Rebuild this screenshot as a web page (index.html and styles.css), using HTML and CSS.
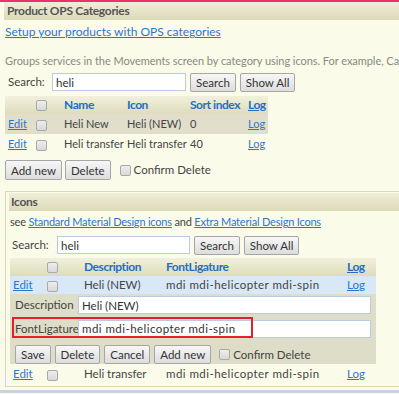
FILE: index.html
```html
<!DOCTYPE html>
<html>
<head>
<meta charset="utf-8">
<link rel="stylesheet" href="styles.css">
</head>
<body>
<div class="topline"></div>
<section class="panel first">
  <h2 class="phead">Product OPS Categories</h2>
  <div class="pbody">
    <a class="link setup" href="#">Setup your products with OPS categories</a>
    <p class="desc">Groups services in the Movements screen by category using icons. For example, Categories</p>
    <div class="search">
      <span class="slabel">Search:</span>
      <input class="field sfield" type="text" value="heli">
      <button class="btn">Search</button>
      <button class="btn">Show All</button>
    </div>
    <table class="grid g1">
      <colgroup><col class="c1"><col class="c2"><col class="c3"><col class="c4"><col class="c5"><col class="c6"></colgroup>
      <thead>
        <tr><th></th><th><input type="checkbox" class="cb"></th><th>Name</th><th>Icon</th><th>Sort index</th><th><a href="#" class="hlink">Log</a></th></tr>
      </thead>
      <tbody>
        <tr class="sel"><td><a class="link" href="#">Edit</a></td><td><input type="checkbox" class="cb"></td><td>Heli New</td><td>Heli (NEW)</td><td>0</td><td><a class="link" href="#">Log</a></td></tr>
        <tr><td><a class="link" href="#">Edit</a></td><td><input type="checkbox" class="cb"></td><td>Heli transfer</td><td>Heli transfer</td><td>40</td><td><a class="link" href="#">Log</a></td></tr>
      </tbody>
    </table>
    <div class="actions">
      <button class="btn">Add new</button>
      <button class="btn">Delete</button>
      <label class="confirm"><input type="checkbox" class="cb">Confirm Delete</label>
    </div>
  </div>
</section>
<section class="panel second">
  <h2 class="phead">Icons</h2>
  <div class="pbody">
    <p class="see">see <a class="link" href="#">Standard Material Design icons</a> and <a class="link" href="#">Extra Material Design Icons</a></p>
    <div class="search s2">
      <span class="slabel">Search:</span>
      <input class="field sfield" type="text" value="heli">
      <button class="btn">Search</button>
      <button class="btn">Show All</button>
    </div>
    <table class="grid g2">
      <colgroup><col class="d1"><col class="d2"><col class="d3"><col class="d4"><col class="d5"></colgroup>
      <thead>
        <tr><th></th><th><input type="checkbox" class="cb"></th><th>Description</th><th>FontLigature</th><th><a href="#" class="hlink">Log</a></th></tr>
      </thead>
      <tbody>
        <tr class="blue"><td><a class="link" href="#">Edit</a></td><td><input type="checkbox" class="cb"></td><td>Heli (NEW)</td><td class="mdi">mdi mdi-helicopter mdi-spin</td><td><a class="link" href="#">Log</a></td></tr>
        <tr class="editrow"><td colspan="5">
          <div class="editor">
            <div class="frow f1"><span class="flabel">Description</span><input class="field finput" type="text" value="Heli (NEW)"></div>
            <div class="frow f2"><span class="flabel">FontLigature</span><input class="field finput mdi" type="text" value="mdi mdi-helicopter mdi-spin"><span class="mark"></span></div>
            <div class="ebtns">
              <button class="btn">Save</button>
              <button class="btn">Delete</button>
              <button class="btn">Cancel</button>
              <button class="btn">Add new</button>
              <label class="confirm"><input type="checkbox" class="cb">Confirm Delete</label>
            </div>
          </div>
        </td></tr>
        <tr class="last"><td><a class="link" href="#">Edit</a></td><td><input type="checkbox" class="cb"></td><td>Heli transfer</td><td class="mdi">mdi mdi-helicopter mdi-spin</td><td><a class="link" href="#">Log</a></td></tr>
      </tbody>
    </table>
  </div>
</section>
<div class="bottomband"></div>
</body>
</html>
```

FILE: styles.css
```css
html, body {
  margin: 0;
  padding: 0;
  background: #fbfbea;
  width: 399px;
  height: 394px;
  overflow: hidden;
}
body {
  font-family: "Lato", "Open Sans", sans-serif;
  font-size: 11.5px;
  color: #444;
  line-height: 14px;
}
.topline {
  height: 2px;
  background: #e8336b;
}
.panel {
  margin: 0;
}
.phead {
  margin: 0;
  font-size: 12px;
  letter-spacing: -0.3px;
  font-weight: bold;
  color: #555;
  background: linear-gradient(#efeed8, #dcdab8);
  height: 18px;
  line-height: 18px;
  padding-left: 3px;
  white-space: nowrap;
}
.first {
  padding-left: 4px;
}
.first .pbody {
  padding-left: 1px;
  white-space: nowrap;
}
.link {
  color: #2a78cc;
  text-decoration: underline;
}
.setup {
  display: block;
  margin-top: 5px;
  font-size: 12px;
  line-height: 14px;
}
.desc {
  margin: 15px 0 0 0;
  font-size: 11px;
  letter-spacing: -0.05px;
  color: #8a8a80;
  white-space: nowrap;
  overflow: hidden;
  line-height: 14px;
}
.search {
  display: flex;
  align-items: center;
  margin-top: 5px;
  height: 18px;
  padding-left: 3px;
}
.slabel {
  width: 44px;
}
.field {
  font-family: inherit;
  font-size: 11.5px;
  color: #333;
  border: 1px solid #b9cbe0;
  background: #fff;
  height: 18px;
  box-sizing: border-box;
  padding: 0 3px;
  margin: 0;
  outline: none;
}
.sfield {
  width: 134px;
  margin-right: 4px;
}
.btn {
  font-family: inherit;
  font-size: 11.5px;
  color: #333;
  height: 19px;
  padding: 0 5px;
  margin: 0 4px 0 0;
  border: 1px solid #a6a6a6;
  border-radius: 2px;
  background: linear-gradient(#f7f7f7, #dddddd);
  line-height: 17px;
}
.grid {
  border-collapse: collapse;
  table-layout: fixed;
  margin-top: 5px;
}
.grid th, .grid td {
  padding: 0 0 0 3px;
  text-align: left;
  white-space: nowrap;
  overflow: hidden;
  vertical-align: middle;
}
.grid th {
  color: #1f6fc2;
  font-size: 12px;
  letter-spacing: -0.45px;
  font-weight: bold;
  background: linear-gradient(#f1f0dc, #dedcbc);
  height: 18px;
}
.g1 { width: 263px; }
.g1 td { height: 20px; font-size: 11px; }
.c1 { width: 28px; }
.c2 { width: 28px; }
.c3 { width: 63px; }
.c4 { width: 63px; }
.c5 { width: 58px; }
.c6 { width: 23px; }
.hlink {
  color: #1f6fc2;
  text-decoration: underline;
}
.sel td {
  background: #e1dfcb;
}
.cb {
  appearance: none;
  -webkit-appearance: none;
  width: 11px;
  height: 11px;
  margin: 0;
  border: 1px solid #a9a9a9;
  border-radius: 2px;
  background: linear-gradient(#eeeeee, #d8d8d8);
  vertical-align: middle;
  box-sizing: border-box;
}
.actions {
  display: flex;
  align-items: center;
  margin-top: 6px;
  height: 20px;
}
.actions .btn {
  height: 20px;
  padding: 0 5px;
  margin-right: 3px;
}
.confirm {
  display: flex;
  align-items: center;
  margin-left: 6px;
}
.confirm .cb {
  margin-right: 3px;
}
.second {
  margin: 11px 0 0 5px;
  border: 1px solid #d9d7b6;
  border-right: none;
  padding: 1px 0 2px 3px;
}
.second .phead {
  padding-left: 2px;
}
.second .pbody {
  padding-left: 1px;
  white-space: nowrap;
}
.see {
  margin: 4px 0 0 0;
  font-size: 11px;
  letter-spacing: -0.2px;
  line-height: 14px;
}
.s2 {
  margin-top: 7px;
  padding-left: 2px;
}
.s2 .slabel { width: 45px; }
.s2 .sfield { width: 133px; }
.g2 { width: 366px; margin-top: 4px; }
.d1 { width: 34px; }
.d2 { width: 37px; }
.d3 { width: 82px; }
.d4 { width: 181px; }
.d5 { width: 32px; }
.mdi {
  letter-spacing: 0.45px;
}
.blue td {
  background: #d8e8f6;
  height: 18px;
}
.last td {
  height: 20px;
}
.editrow td {
  padding: 0;
  background: #deddc7;
}
.editor {
  padding: 2px 5px 0 5px;
}
.frow {
  display: flex;
  align-items: center;
  position: relative;
}
.f1 {
  height: 18px;
  margin-bottom: 5px;
}
.f2 {
  height: 19px;
}
.flabel {
  width: 63px;
}
.finput {
  width: 293px;
  height: 18px;
}
.mark {
  position: absolute;
  left: -3px;
  top: -2px;
  width: 237px;
  height: 17px;
  border: 2px solid #e3202b;
}
.ebtns {
  display: flex;
  align-items: center;
  margin-top: 7px;
  height: 19px;
}
.ebtns .btn {
  padding: 0 5px;
}
.ebtns .confirm {
  margin-left: 4px;
}
.bottomband {
  height: 3px;
  margin-top: 3px;
  background: #c8d3df;
}
```
